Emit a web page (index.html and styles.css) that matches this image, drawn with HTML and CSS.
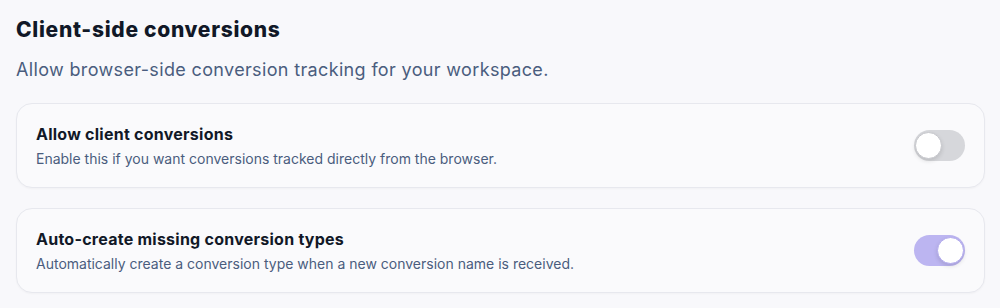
FILE: index.html
```html
<!DOCTYPE html>
<html lang="en">
<head>
    <meta charset="UTF-8">
    <meta name="viewport" content="width=device-width, initial-scale=1.0">
    <title>Client-side conversions</title>
    <link rel="stylesheet" href="styles.css">
</head>
<body>
    <section class="settings">
        <h1 class="settings-title">Client-side conversions</h1>
        <p class="settings-subtitle">Allow browser-side conversion tracking for your workspace.</p>

        <div class="setting-card">
            <div class="setting-text">
                <h2>Allow client conversions</h2>
                <p>Enable this if you want conversions tracked directly from the browser.</p>
            </div>
            <button class="toggle" aria-pressed="false"><span class="knob"></span></button>
        </div>

        <div class="setting-card">
            <div class="setting-text">
                <h2>Auto-create missing conversion types</h2>
                <p>Automatically create a conversion type when a new conversion name is received.</p>
            </div>
            <button class="toggle on" aria-pressed="true"><span class="knob"></span></button>
        </div>
    </section>
</body>
</html>
```

FILE: styles.css
```css
* {
    margin: 0;
    padding: 0;
    box-sizing: border-box;
    font-family: 'Inter', 'Liberation Sans', sans-serif;
}

body {
    background: #f8f8fb;
    width: 1000px;
    height: 308px;
    overflow: hidden;
}

.settings {
    padding: 16px 15px 0 16px;
}

.settings-title {
    font-size: 21px;
    font-weight: 800;
    color: #111827;
    line-height: 28px;
    margin-bottom: 13px;
    letter-spacing: 0.7px;
}

.settings-subtitle {
    font-size: 18px;
    font-weight: 400;
    color: #4a5d7e;
    line-height: 26px;
    margin-bottom: 20px;
    letter-spacing: 0.35px;
}

.setting-card {
    display: flex;
    align-items: center;
    justify-content: space-between;
    height: 85px;
    padding: 0 19px 0 19px;
    background: #fafafc;
    border: 1px solid #e7e8ee;
    border-radius: 16px;
    box-shadow: 0 1px 2px rgba(17, 24, 39, 0.03);
    margin-bottom: 20px;
}

.setting-text h2 {
    font-size: 16px;
    font-weight: 700;
    color: #111827;
    line-height: 22px;
    margin-bottom: 4px;
    letter-spacing: 0.25px;
}

.setting-text p {
    font-size: 14px;
    color: #4a5d7e;
    line-height: 20px;
}

.toggle {
    position: relative;
    width: 51px;
    height: 31px;
    border: none;
    border-radius: 16px;
    background: #d6d7db;
    cursor: pointer;
}

.knob {
    position: absolute;
    top: 2px;
    left: 1px;
    width: 27px;
    height: 27px;
    border-radius: 50%;
    background: #ffffff;
    border: 1.5px solid #c6c7cc;
    box-shadow: 0 2px 4px rgba(0, 0, 0, 0.12);
}

.toggle.on {
    background: #bcb5f1;
}

.toggle.on .knob {
    left: 23px;
    border-color: #b3abee;
}
```
